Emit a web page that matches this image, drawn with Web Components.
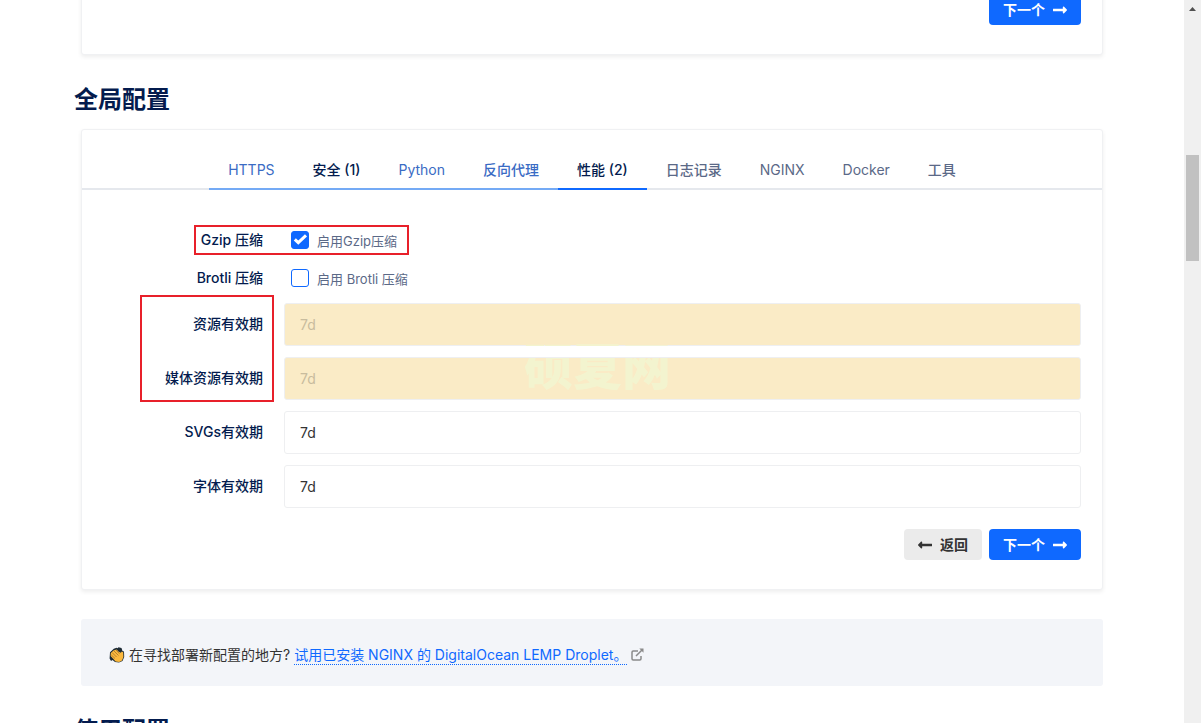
<!DOCTYPE html>
<html lang="zh-CN">
<head>
<meta charset="utf-8">
<title>NGINXConfig</title>
<style>
  html, body { margin: 0; height: 100%; overflow: hidden; }
  body { font-family: Inter, "Noto Sans CJK SC", sans-serif; font-size: 14px; line-height: 20px; color: #333; background: #fff; }
</style>
</head>
<body>
<config-page></config-page>

<template id="config-page">
  <style>
    :host { display: flex; height: 100vh; overflow: hidden; }
    main { flex: 1; min-width: 0; padding: 0 81px; overflow: hidden; }
    h2 { margin: 27px -7px 11px; font-size: 24px; line-height: 36px; font-weight: 700; color: #031b4e; }
    .previous { margin-top: -7px; }
    .fields { position: relative; display: grid; gap: 11px; padding: 37px 21px 0; }
    .actions { display: flex; justify-content: flex-end; gap: 7px; padding: 21px 21px 29px; }
    .previous .actions { padding-top: 0; }
    .mark { position: absolute; border: 2px solid #e8202a; pointer-events: none; box-sizing: border-box; }
    .gzip { left: 112px; top: 35px; width: 215px; height: 30px; }
    .expiry { left: 58px; top: 105px; width: 134px; height: 107px; }
    /* the mark is tinted only where it crosses the two highlighted inputs */
    .watermark { position: absolute; left: 442px; top: 144px; font-size: 49px; line-height: 68px; font-weight: 900; color: transparent; background: linear-gradient(#f3f4cf 12px, transparent 12px, transparent 24px, #f3f4cf 24px); background-clip: text; -webkit-background-clip: text; pointer-events: none; white-space: nowrap; }
    deploy-banner { margin-top: 29px; }
  </style>
  <main>
    <content-card class="previous">
      <div class="actions"><step-button kind="next">下一个</step-button></div>
    </content-card>
    <h2>全局配置</h2>
    <content-card>
      <tab-strip></tab-strip>
      <div class="fields">
        <check-field label="Gzip 压缩" text="启用Gzip压缩" checked></check-field>
        <check-field label="Brotli 压缩" text="启用 Brotli 压缩"></check-field>
        <text-field label="资源有效期" value="7d" changed></text-field>
        <text-field label="媒体资源有效期" value="7d" changed></text-field>
        <text-field label="SVGs有效期" value="7d"></text-field>
        <text-field label="字体有效期" value="7d"></text-field>
        <div class="mark gzip"></div>
        <div class="mark expiry"></div>
        <div class="watermark">硕夏网</div>
      </div>
      <div class="actions"><step-button kind="back">返回</step-button><step-button kind="next">下一个</step-button></div>
    </content-card>
    <deploy-banner></deploy-banner>
    <h2>使用配置</h2>
  </main>
  <scroll-rail></scroll-rail>
</template>

<template id="content-card">
  <style>
    :host { display: block; border: 1px solid #f0f1f3; border-radius: 3px; background: #fff; box-shadow: 0 2px 4px rgba(0,0,0,.07); }
  </style>
  <slot></slot>
</template>

<template id="tab-strip">
  <style>
    :host { display: flex; justify-content: center; margin-top: 22px; box-shadow: inset 0 -2px 0 #e5e8ed; }
    button { appearance: none; border: 0; border-bottom: 2px solid transparent; background: none; margin: 0; padding: 0 19px; height: 38px; font: inherit; color: #5b6987; white-space: nowrap; }
    .cjk { font-weight: 500; }
    .seen { color: #3a6bc4; border-color: #74aaf5; }
    .changed { color: #031b4e; border-color: #74aaf5; font-weight: 500; }
    .active { color: #031b4e; border-color: #0f69ff; font-weight: 500; }
  </style>
  <button role="tab" class="seen">HTTPS</button>
  <button role="tab" class="changed">安全 (1)</button>
  <button role="tab" class="seen">Python</button>
  <button role="tab" class="seen cjk">反向代理</button>
  <button role="tab" class="active" aria-selected="true">性能 (2)</button>
  <button role="tab" class="cjk">日志记录</button>
  <button role="tab">NGINX</button>
  <button role="tab">Docker</button>
  <button role="tab" class="cjk">工具</button>
</template>

<template id="check-field">
  <style>
    :host { display: grid; grid-template-columns: 160px 1fr; column-gap: 28px; align-items: center; height: 27px; box-sizing: border-box; padding-bottom: 1px; }
    .name { text-align: right; font-weight: 500; color: #031b4e; }
    .control { display: flex; align-items: center; gap: 8px; font-size: 13px; color: #5b6987; }
    .text { padding-top: 2px; }
    .box { display: grid; width: 18px; height: 18px; }
    input { grid-area: 1 / 1; appearance: none; margin: 0; width: 18px; height: 18px; box-sizing: border-box; border: 1px solid #0f69ff; border-radius: 3px; background: #fff; }
    input:checked { background: #0f69ff; }
    svg { grid-area: 1 / 1; display: none; pointer-events: none; z-index: 1; }
    input:checked + svg { display: block; }
  </style>
  <label class="name" for="c"></label>
  <div class="control">
    <span class="box"><input type="checkbox" id="c"><svg width="18" height="18" viewBox="0 0 18 18"><path d="M3.800 8.300 7.300 11.600 15 4.400" fill="none" stroke="#fff" stroke-width="3"/></svg></span>
    <label class="text" for="c"></label>
  </div>
</template>

<template id="text-field">
  <style>
    :host { display: grid; grid-template-columns: 160px 1fr; column-gap: 21px; align-items: center; }
    label { text-align: right; font-weight: 500; color: #031b4e; padding-bottom: 1px; }
    input { box-sizing: border-box; width: 100%; height: 43px; margin: 0; padding: 0 15px; border: 1px solid #eeeff1; border-radius: 3px; background: #fff; color: #333; font: inherit; }
    :host([changed]) input { background: #faebc6; color: #c8bc9e; }
  </style>
  <label for="t"></label>
  <input type="text" id="t">
</template>

<template id="step-button">
  <style>
    :host { display: block; }
    button { display: flex; align-items: center; gap: 8px; height: 31px; margin: 0; padding: 0 14px; border: 0; border-radius: 4px; background: #0f69ff; color: #fff; font: inherit; font-weight: 700; white-space: nowrap; }
    :host([kind="back"]) button { flex-direction: row-reverse; background: #ebebeb; color: #333; }
    :host([kind="back"]) svg { transform: scaleX(-1); }
  </style>
  <button><slot></slot><svg width="14" height="16" viewBox="0 0 448 512" fill="currentColor"><path d="M313.941 216H12c-6.627 0-12 5.373-12 12v56c0 6.627 5.373 12 12 12h301.941v46.059c0 21.382 25.851 32.09 40.971 16.971l86.059-86.059c9.373-9.373 9.373-24.569 0-33.941l-86.059-86.059c-15.119-15.119-40.971-4.411-40.971 16.971V216z"/></svg></button>
</template>

<template id="deploy-banner">
  <style>
    :host { display: flex; align-items: center; height: 67px; padding: 4px 28px 0; border-radius: 3px; background: #f3f5f9; box-sizing: border-box; }
    p { display: flex; align-items: center; margin: 0; white-space: nowrap; }
    .hands { margin-right: 4px; }
    a { color: #0f69ff; text-decoration: none; border-bottom: 1px dotted #0f69ff; line-height: 18px; padding-top: 1px; margin: 0 4px; }
  </style>
  <p>
    <svg class="hands" width="16" height="16" viewBox="0 0 16 16"><path d="M1 5.200 4.800 1.800 7.500.8 8.500 1.200 9.500.2 12.500 1 13.500 4 15 4.500 15.200 10 13.500 14 10 15.500 6 15 3.500 13 2 14 .6 11.500z" fill="#1d2b36"/><path d="M1.800 6 4.500 3.400 7.600 2.400l2.200 2.400 2 1 1-1.300 1.400.8.2 4.600-1.400 3.500-2.800 1.500-3.600-.5-2.200-2.400-2.800-2.900z" fill="#fbb83d"/><path d="m3 5.500 4.500 4.500M5 4l4.500 4.500M7 3l3.500 3.700M2.300 8 6 11.500" stroke="#9a6a28" stroke-width=".7" fill="none"/></svg>
    <span>在寻找部署新配置的地方?</span>
    <a href="#">试用已安装 NGINX 的 DigitalOcean LEMP Droplet。</a>
    <svg width="13" height="13" viewBox="0 0 13 13" fill="none" stroke="#8a8a8a" stroke-width="1.500"><path d="M7 3H2.200c-.8 0-1.200.4-1.200 1.200v6.600c0 .8.4 1.200 1.200 1.200h6.600c.8 0 1.200-.4 1.200-1.200V8M5 8l6-6"/><path d="M8.300.6h4.200v4.200z" fill="#8a8a8a" stroke="none"/></svg>
  </p>
</template>

<template id="scroll-rail">
  <style>
    :host { display: flex; flex-direction: column; width: 17px; background: #f0f0f0; }
    svg { flex: none; }
    .thumb { margin: 138px 2px 0; height: 106px; background: #c1c1c1; }
  </style>
  <svg width="17" height="17" viewBox="0 0 17 17"><path d="M5 11h7L8.500 7z" fill="#505050"/></svg>
  <div class="thumb"></div>
</template>

<script>
  class TemplateElement extends HTMLElement {
    constructor() {
      super();
      this.attachShadow({ mode: "open" }).append(
        document.getElementById(this.localName).content.cloneNode(true));
    }
  }
  class CheckField extends TemplateElement {
    connectedCallback() {
      this.shadowRoot.querySelector(".name").textContent = this.getAttribute("label");
      this.shadowRoot.querySelector(".text").textContent = this.getAttribute("text");
      this.shadowRoot.querySelector("input").checked = this.hasAttribute("checked");
    }
  }
  class TextField extends TemplateElement {
    connectedCallback() {
      this.shadowRoot.querySelector("label").textContent = this.getAttribute("label");
      this.shadowRoot.querySelector("input").value = this.getAttribute("value");
    }
  }
  customElements.define("content-card", class extends TemplateElement {});
  customElements.define("tab-strip", class extends TemplateElement {});
  customElements.define("check-field", CheckField);
  customElements.define("text-field", TextField);
  customElements.define("step-button", class extends TemplateElement {});
  customElements.define("deploy-banner", class extends TemplateElement {});
  customElements.define("scroll-rail", class extends TemplateElement {});
  customElements.define("config-page", class extends TemplateElement {});
</script>
</body>
</html>
